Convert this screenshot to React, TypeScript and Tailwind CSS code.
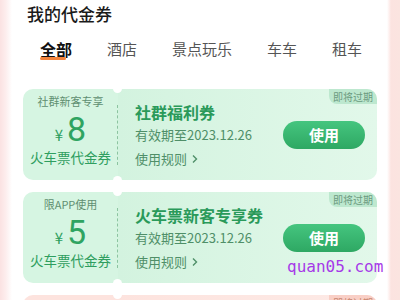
import React from "react";

const font = { fontFamily: '"Noto Sans CJK SC", "Noto Sans", sans-serif' };

function Card({
  top,
  amount,
  title,
  pink,
}: {
  top?: string;
  amount?: string;
  title?: string;
  pink?: boolean;
}) {
  const bgLeft = pink ? "bg-[#fde3de]" : "bg-[#d6f5e2]";
  const bgRight = pink
    ? "bg-[linear-gradient(to_right,#fde3de,#fdeae6)]"
    : "bg-[linear-gradient(to_right,#d3f3df,#e2f8ea)]";
  return (
    <div className="relative mx-[23px] h-[91px] flex rounded-[10px] overflow-hidden shrink-0">
      <div className={`w-[95px] ${bgLeft} flex flex-col items-center`}>
        {top && (
          <>
            <div className="mt-[4px] text-[11px] leading-[16px] text-[#5f8f71]">{top}</div>
            <div className="mt-[4px] flex items-baseline h-[32px] leading-[32px]">
              <span className="text-[15px] text-[#2f9e5f] mr-[4px]">¥</span>
              <span className="text-[34px] text-[#2fa461]" style={{ fontFamily: '"Roboto", sans-serif' }}>
                {amount}
              </span>
            </div>
            <div className="mt-[3px] text-[13.5px] leading-[18px] text-[#2f9e5f]">火车票代金券</div>
          </>
        )}
      </div>
      <div className={`flex-1 ${bgRight} flex items-center pl-[17px] pr-[12px]`}>
        {title && (
          <>
            <div className="flex-1 flex flex-col">
              <div className="text-[16px] leading-[22px] font-bold text-[#2a9a5a]">{title}</div>
              <div className="text-[13px] leading-[18px] text-[#4f8f68] mt-[3px]">有效期至2023.12.26</div>
              <div className="text-[13px] leading-[18px] text-[#4f8f68] mt-[6px] flex items-center">
                使用规则
                <svg width="10" height="10" viewBox="0 0 10 10" className="ml-[3px]">
                  <path d="M3 1.5 L6.5 5 L3 8.5" stroke="#4f8f68" strokeWidth="1.4" fill="none" />
                </svg>
              </div>
            </div>
            <div className="w-[82px] h-[28px] rounded-full bg-[linear-gradient(to_bottom,#45c57f,#2ea863)] flex items-center justify-center text-white text-[15px] font-bold mt-[1px]">
              使用
            </div>
          </>
        )}
      </div>
      {/* dashed divider */}
      {title && <div className="absolute left-[94px] top-[16px] h-[60px] border-l border-dashed border-[#8cc4a0]" />}
      {/* notches */}
      <div className="absolute left-[90px] top-[-5px] w-[9px] h-[9px] rounded-full bg-white" />
      <div className="absolute left-[90px] bottom-[-5px] w-[9px] h-[9px] rounded-full bg-white" />
      {/* badge */}
      <div
        className={`absolute right-0 top-0 w-[48px] h-[15px] rounded-bl-[8px] flex items-center justify-center text-[10px] leading-[15px] ${
          pink ? "bg-[#f9cfc6] text-[#c98770]" : "bg-[#bde8cf] text-[#6b9a80]"
        }`}
      >
        即将过期
      </div>
    </div>
  );
}

export default function App() {
  return (
    <div
      className="relative w-[400px] h-[300px] overflow-hidden bg-[linear-gradient(to_right,#fbe2e2_0px,#fdeeee_6px,#ffffff_12px,#ffffff_387px,#fce3e0_391px,#fbe4e0_400px)]"
      style={font}
    >
      <div className="pt-[3px] pl-[27px] text-[17px] leading-[22px] font-medium text-[#1a1a1a]">我的代金券</div>
      <div className="mt-[13px] pl-[40px] flex items-start gap-[35px] text-[15px] leading-[22px] text-[#555]">
        <div className="flex flex-col items-center">
          <span className="text-[16px] font-bold text-[#111]">全部</span>
          <div className="mt-[-3px] w-[26px] h-[3px] rounded-full bg-[#f5843c] self-start" />
        </div>
        <span>酒店</span>
        <span>景点玩乐</span>
        <span>车车</span>
        <span>租车</span>
      </div>
      <div className="mt-[29px] flex flex-col gap-[12px]">
        <Card top="社群新客专享" amount="8" title="社群福利券" />
        <Card top="限APP使用" amount="5" title="火车票新客专享券" />
        <Card pink />
      </div>
      <div
        className="absolute left-[287px] top-[255px] text-[16px] leading-[24px] text-[#a63ae8]"
        style={{ fontFamily: '"DejaVu Sans Mono", monospace' }}
      >
        quan05.com
      </div>
    </div>
  );
}
